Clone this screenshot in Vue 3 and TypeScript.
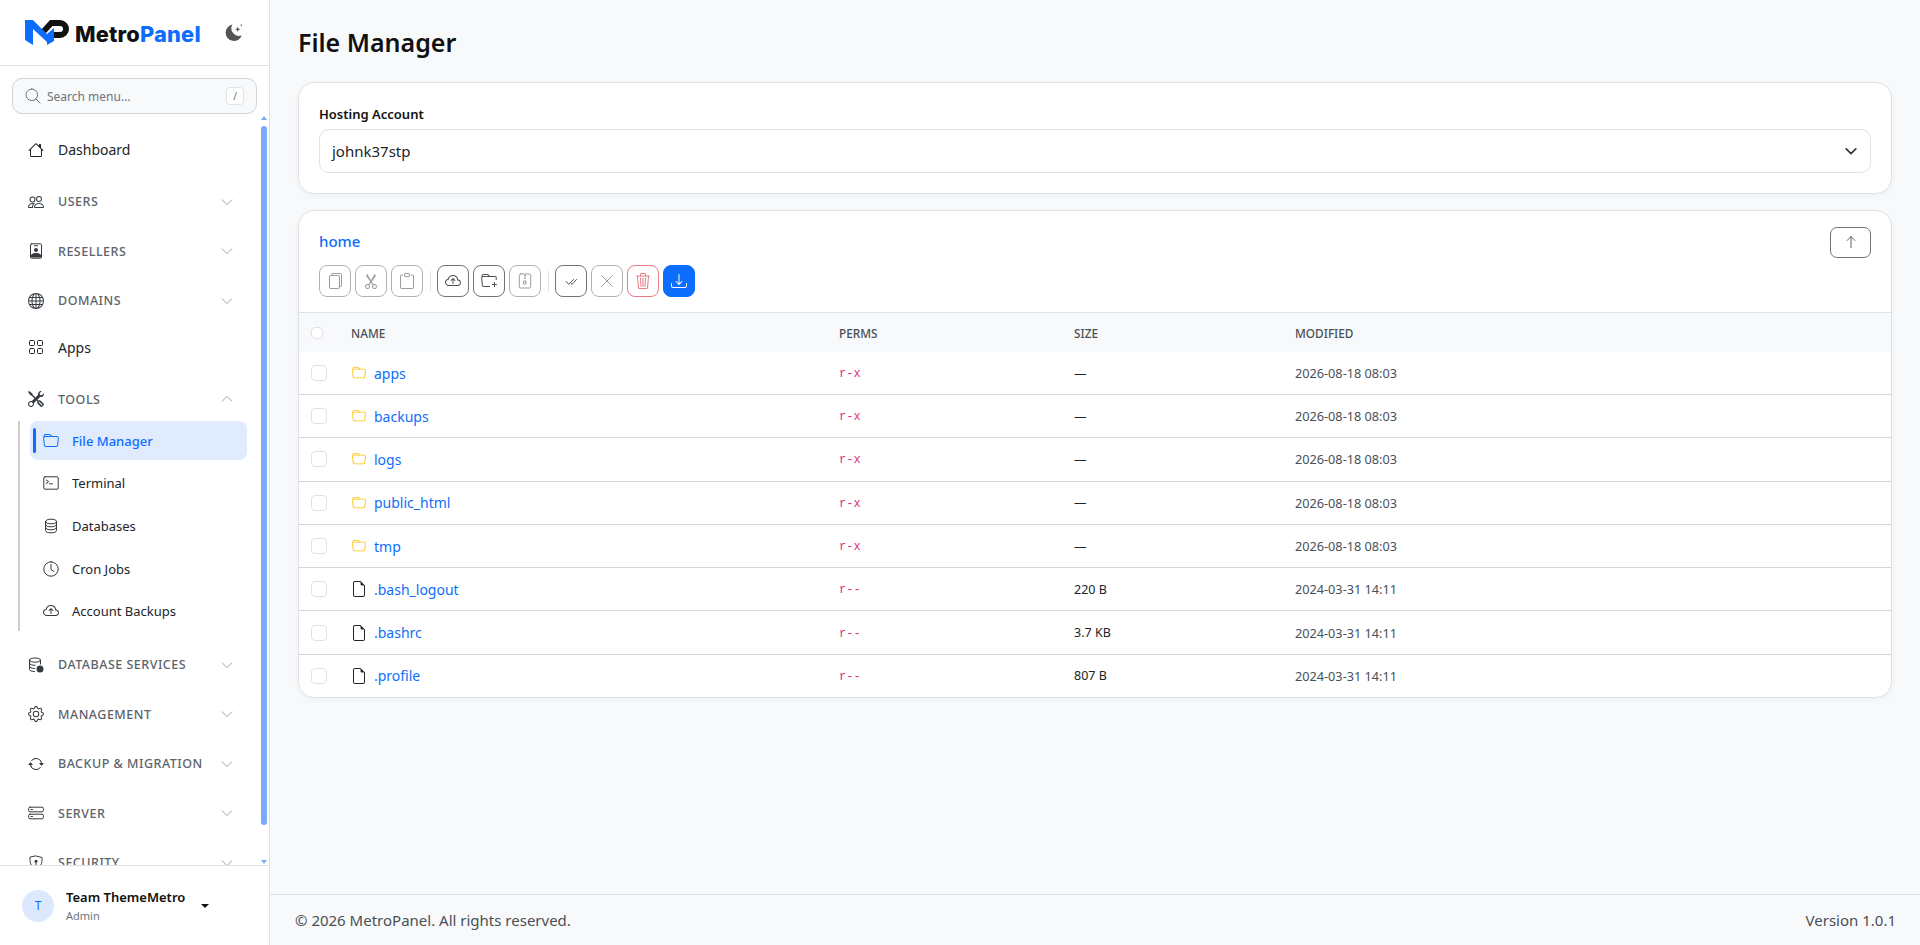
<script setup lang="ts">
import { h } from 'vue'

type IconDef = { s?: string; f?: string }

const icons: Record<string, IconDef> = {
  house: { f: 'M8.707 1.5a1 1 0 0 0-1.414 0L.646 8.146a.5.5 0 0 0 .708.708L2 8.207V13.5A1.5 1.5 0 0 0 3.5 15h9a1.5 1.5 0 0 0 1.5-1.5V8.207l.646.647a.5.5 0 0 0 .708-.708L13 5.793V2.5a.5.5 0 0 0-.5-.5h-1a.5.5 0 0 0-.5.5v1.293L8.707 1.5ZM13 7.207V13.5a.5.5 0 0 1-.5.5h-9a.5.5 0 0 1-.5-.5V7.207l5-5 5 5Z' },
  people: { f: 'M15 14s1 0 1-1-1-4-5-4-5 3-5 4 1 1 1 1h8Zm-7.978-1A.261.261 0 0 1 7 12.996c.001-.264.167-1.03.76-1.72C8.312 10.629 9.282 10 11 10c1.717 0 2.687.63 3.24 1.276.593.69.758 1.457.76 1.72l-.008.002a.274.274 0 0 1-.014.002H7.022ZM11 7a2 2 0 1 0 0-4 2 2 0 0 0 0 4Zm3-2a3 3 0 1 1-6 0 3 3 0 0 1 6 0ZM6.936 9.28a5.88 5.88 0 0 0-1.23-.247A7.35 7.35 0 0 0 5 9c-4 0-5 3-5 4 0 .667.333 1 1 1h4.216A2.238 2.238 0 0 1 5 13c0-1.01.377-2.042 1.09-2.904.243-.294.526-.569.846-.816ZM4.92 10A5.493 5.493 0 0 0 4 13H1c0-.26.164-1.03.76-1.724.545-.636 1.492-1.256 3.16-1.275ZM1.5 5.5a3 3 0 1 1 6 0 3 3 0 0 1-6 0Zm3-2a2 2 0 1 0 0 4 2 2 0 0 0 0-4Z' },
  badge: {
    s: 'M3.5.8h9a1 1 0 0 1 1 1v12.4a1 1 0 0 1-1 1h-9a1 1 0 0 1-1-1V1.8a1 1 0 0 1 1-1ZM6.5 2.8h3',
    f: 'M8 5a2 2 0 1 1 0 4 2 2 0 0 1 0-4ZM3 14.5V12c1-1.5 3-2 5-2s4 .5 5 2v2.5Z'
  },
  globe: { f: 'M0 8a8 8 0 1 1 16 0A8 8 0 0 1 0 8zm7.5-6.923c-.67.204-1.335.82-1.887 1.855A7.97 7.97 0 0 0 5.145 4H7.5V1.077zM4.09 4a9.267 9.267 0 0 1 .64-1.539 6.7 6.7 0 0 1 .597-.933A7.025 7.025 0 0 0 2.255 4H4.09zm-.582 3.5c.03-.877.138-1.718.312-2.5H1.674a6.958 6.958 0 0 0-.656 2.5h2.49zM4.847 5a12.5 12.5 0 0 0-.338 2.5H7.5V5H4.847zM8.5 5v2.5h2.99a12.495 12.495 0 0 0-.337-2.5H8.5zM4.51 8.5a12.5 12.5 0 0 0 .337 2.5H7.5V8.5H4.51zm3.99 0V11h2.653c.187-.765.306-1.608.338-2.5H8.5zM5.145 12c.138.386.295.744.468 1.068.552 1.035 1.218 1.65 1.887 1.855V12H5.145zm.182 2.472a6.696 6.696 0 0 1-.597-.933A9.268 9.268 0 0 1 4.09 12H2.255a7.024 7.024 0 0 0 3.072 2.472zM3.82 11a13.652 13.652 0 0 1-.312-2.5h-2.49c.062.89.291 1.733.656 2.5H3.82zm6.853 3.472A7.024 7.024 0 0 0 13.745 12H11.91a9.27 9.27 0 0 1-.64 1.539 6.688 6.688 0 0 1-.597.933zM8.5 12v2.923c.67-.204 1.335-.82 1.887-1.855.173-.324.33-.682.468-1.068H8.5zm3.68-1h2.146c.365-.767.594-1.61.656-2.5h-2.49a13.65 13.65 0 0 1-.312 2.5zm2.802-3.5a6.959 6.959 0 0 0-.656-2.5H12.18c.174.782.282 1.623.312 2.5h2.49zM11.27 2.461c.247.464.462.98.64 1.539h1.835a7.024 7.024 0 0 0-3.072-2.472c.218.284.418.598.597.933zM10.855 4a7.966 7.966 0 0 0-.468-1.068C9.835 1.897 9.17 1.282 8.5 1.077V4h2.355z' },
  grid: { s: 'M2.5 1.5h3a1 1 0 0 1 1 1v3a1 1 0 0 1-1 1h-3a1 1 0 0 1-1-1v-3a1 1 0 0 1 1-1ZM10.5 1.5h3a1 1 0 0 1 1 1v3a1 1 0 0 1-1 1h-3a1 1 0 0 1-1-1v-3a1 1 0 0 1 1-1ZM2.5 9.500h3a1 1 0 0 1 1 1v3a1 1 0 0 1-1 1h-3a1 1 0 0 1-1-1v-3a1 1 0 0 1 1-1ZM10.5 9.500h3a1 1 0 0 1 1 1v3a1 1 0 0 1-1 1h-3a1 1 0 0 1-1-1v-3a1 1 0 0 1 1-1Z' },
  tools: { f: 'M1 0 0 1l2.2 3.081a1 1 0 0 0 .815.419h.07a1 1 0 0 1 .708.293l2.675 2.675-2.617 2.654A3.003 3.003 0 0 0 0 13a3 3 0 1 0 5.878-.851l2.654-2.617.968.968-.305.914a1 1 0 0 0 .242 1.023l3.27 3.27a.997.997 0 0 0 1.414 0l1.586-1.586a.997.997 0 0 0 0-1.414l-3.27-3.27a1 1 0 0 0-1.023-.242L10.5 9.5l-.96-.96 2.68-2.643A3.005 3.005 0 0 0 16 3c0-.269-.035-.53-.102-.777l-2.14 2.141L12 4l-.364-1.757L13.777.102a3 3 0 0 0-3.675 3.68L7.462 6.46 4.793 3.793a1 1 0 0 1-.293-.707v-.071a1 1 0 0 0-.419-.814L1 0Zm9.646 10.646a.5.5 0 0 1 .708 0l2.914 2.915a.5.5 0 0 1-.707.707l-2.915-2.914a.5.5 0 0 1 0-.708ZM3 11l.471.242.529.026.287.445.445.287.026.529L5 13l-.242.471-.026.529-.445.287-.287.445-.529.026L3 15l-.471-.242L2 14.732l-.287-.445L1.268 14l-.026-.529L1 13l.242-.471.026-.529.445-.287.287-.445.529-.026L3 11Z' },
  folder: { f: 'M.54 3.87.5 3a2 2 0 0 1 2-2h3.672a2 2 0 0 1 1.414.586l.828.828A2 2 0 0 0 9.828 3h3.982a2 2 0 0 1 1.992 2.181l-.637 7A2 2 0 0 1 13.174 14H2.826a2 2 0 0 1-1.991-1.819l-.637-7a1.99 1.99 0 0 1 .342-1.31zM2.19 4a1 1 0 0 0-.996 1.09l.637 7a1 1 0 0 0 .995.91h10.348a1 1 0 0 0 .995-.91l.637-7A1 1 0 0 0 13.81 4H2.19zm4.69-1.707A1 1 0 0 0 6.172 2H2.5a1 1 0 0 0-1 .981l.006.139C1.72 3.042 1.95 3 2.19 3h5.396l-.707-.707z' },
  terminal: { s: 'M2 1.8h12A1.2 1.2 0 0 1 15.2 3v10a1.2 1.2 0 0 1-1.2 1.2H2A1.2 1.2 0 0 1 .8 13V3A1.2 1.2 0 0 1 2 1.8ZM3.2 5l2.5 1.7-2.5 1.7M6.5 8.8h3' },
  database: { s: 'M2.5 3.5C2.5 2 5 1.2 8 1.2s5.5.8 5.5 2.3S11 5.8 8 5.8 2.5 5 2.5 3.5ZM2.5 3.5v9C2.5 14 5 14.8 8 14.8s5.5-.8 5.5-2.3v-9M2.5 6.500C2.5 8 5 8.800 8 8.800s5.5-.8 5.5-2.3M2.5 9.500C2.5 11 5 11.800 8 11.800s5.500-.8 5.500-2.300' },
  clock: { s: 'M8 .8a7.2 7.2 0 1 0 0 14.4A7.2 7.2 0 0 0 8 .8ZM8 3.5v5l3 2' },
  cloudUp: { f: 'M7.646 5.146a.5.5 0 0 1 .708 0l2 2a.5.5 0 0 1-.708.708L8.5 6.707V10.5a.5.5 0 0 1-1 0V6.707L6.354 7.854a.5.5 0 1 1-.708-.708l2-2zM4.406 3.342A5.53 5.53 0 0 1 8 2c2.69 0 4.923 2 5.166 4.579C14.758 6.804 16 8.137 16 9.773 16 11.569 14.502 13 12.687 13H3.781C1.708 13 0 11.366 0 9.318c0-1.763 1.266-3.223 2.942-3.593.143-.863.698-1.723 1.464-2.383zm.653.757c-.757.653-1.153 1.44-1.153 2.056v.448l-.445.049C2.064 6.805 1 7.952 1 9.318 1 10.785 2.23 12 3.781 12h8.906C13.98 12 15 10.988 15 9.773c0-1.216-1.02-2.228-2.313-2.228h-.5v-.5C12.188 4.825 10.328 3 8 3a4.53 4.53 0 0 0-2.941 1.1z' },
  dbGear: {
    s: 'M1.5 3C1.5 1.8 4 1 7 1s5.5.8 5.5 2S10 5.2 7 5.2 1.5 4.2 1.5 3ZM1.5 3v9.5c0 1.2 2.2 2 5 2M12.5 3v4M1.5 6.3c0 1.2 2.5 2 5.5 2M1.5 9.5c0 1.2 2.2 2 5 2',
    f: 'M12 8.5a3.5 3.5 0 1 1 0 7 3.5 3.5 0 0 1 0-7Z'
  },
  gear: { f: 'M8 4.754a3.246 3.246 0 1 0 0 6.492 3.246 3.246 0 0 0 0-6.492zM5.754 8a2.246 2.246 0 1 1 4.492 0 2.246 2.246 0 0 1-4.492 0zM9.796 1.343c-.527-1.79-3.065-1.79-3.592 0l-.094.319a.873.873 0 0 1-1.255.52l-.292-.16c-1.64-.892-3.433.902-2.54 2.541l.159.292a.873.873 0 0 1-.52 1.255l-.319.094c-1.79.527-1.79 3.065 0 3.592l.319.094a.873.873 0 0 1 .52 1.255l-.16.292c-.892 1.64.901 3.434 2.541 2.54l.292-.159a.873.873 0 0 1 1.255.52l.094.319c.527 1.79 3.065 1.79 3.592 0l.094-.319a.873.873 0 0 1 1.255-.52l.292.16c1.64.893 3.434-.902 2.54-2.541l-.159-.292a.873.873 0 0 1 .52-1.255l.319-.094c1.79-.527 1.79-3.065 0-3.592l-.319-.094a.873.873 0 0 1-.52-1.255l.16-.292c.893-1.64-.902-3.433-2.541-2.54l-.292.159a.873.873 0 0 1-1.255-.52l-.094-.319zm-2.633.283c.246-.835 1.428-.835 1.674 0l.094.319a1.873 1.873 0 0 0 2.693 1.115l.291-.16c.764-.415 1.6.42 1.184 1.185l-.159.292a1.873 1.873 0 0 0 1.116 2.692l.318.094c.835.246.835 1.428 0 1.674l-.319.094a1.873 1.873 0 0 0-1.115 2.693l.16.291c.415.764-.42 1.6-1.185 1.184l-.291-.159a1.873 1.873 0 0 0-2.693 1.116l-.094.318c-.246.835-1.428.835-1.674 0l-.094-.319a1.873 1.873 0 0 0-2.692-1.115l-.292.16c-.764.415-1.6-.42-1.184-1.185l.159-.291A1.873 1.873 0 0 0 1.945 8.93l-.319-.094c-.835-.246-.835-1.428 0-1.674l.319-.094A1.873 1.873 0 0 0 3.06 4.377l-.16-.292c-.415-.764.42-1.6 1.185-1.184l.292.159a1.873 1.873 0 0 0 2.692-1.115l.094-.319z' },
  sync: { f: 'M11.534 7h3.932a.25.25 0 0 1 .192.41l-1.966 2.36a.25.25 0 0 1-.384 0l-1.966-2.36a.25.25 0 0 1 .192-.41zm-11 2h3.932a.25.25 0 0 0 .192-.41L2.692 6.23a.25.25 0 0 0-.384 0L.342 8.59A.25.25 0 0 0 .534 9zM8 3c-1.552 0-2.94.707-3.857 1.818a.5.5 0 1 1-.771-.636A6.002 6.002 0 0 1 13.917 7H12.9A5.002 5.002 0 0 0 8 3zM3.1 9a5.002 5.002 0 0 0 8.757 2.182.5.5 0 1 1 .771.636A6.002 6.002 0 0 1 2.083 9H3.1z' },
  server: { s: 'M2 2.2h12a1.4 1.4 0 0 1 1.4 1.4v1.8A1.4 1.4 0 0 1 14 6.8H2A1.4 1.4 0 0 1 .6 5.4V3.6A1.4 1.4 0 0 1 2 2.2ZM2 9.2h12a1.4 1.4 0 0 1 1.4 1.4v1.8a1.4 1.4 0 0 1-1.4 1.4H2a1.4 1.4 0 0 1-1.4-1.4v-1.8A1.4 1.4 0 0 1 2 9.2ZM3 4.5h1.5M3 11.5h1.5' },
  shield: { s: 'M8 1l6 1.5c.4 6-1.5 10-6 12.5C3.5 12.5 1.600 8.500 2 2.500ZM8 8v3', f: 'M8 4.800a1.500 1.500 0 1 1 0 3 1.500 1.500 0 0 1 0-3Z' },
  chevDown: { s: 'M2.5 5.500 8 11l5.500-5.500' },
  chevUp: { s: 'M2.5 10.500 8 5l5.500 5.500' },
  search: { s: 'M6.800 1a5.800 5.800 0 1 0 0 11.600A5.800 5.800 0 0 0 6.800 1ZM11 11l4 4' },
  copy: { f: 'M13 0H6a2 2 0 0 0-2 2 2 2 0 0 0-2 2v10a2 2 0 0 0 2 2h7a2 2 0 0 0 2-2 2 2 0 0 0 2-2V2a2 2 0 0 0-2-2zm0 13V4a2 2 0 0 0-2-2H5a1 1 0 0 1 1-1h7a1 1 0 0 1 1 1v10a1 1 0 0 1-1 1zM3 4a1 1 0 0 1 1-1h7a1 1 0 0 1 1 1v10a1 1 0 0 1-1 1H4a1 1 0 0 1-1-1V4z' },
  cut: { f: 'M3.5 3.5c-.614-.884-.074-1.962.858-2.5L8 7.226 11.642 1c.932.538 1.472 1.616.858 2.5L8.81 8.61l1.556 2.661a2.5 2.5 0 1 1-.794.637L8 9.73l-1.572 2.177a2.5 2.5 0 1 1-.794-.637L7.19 8.61 3.5 3.5zm2.5 10a1.5 1.5 0 1 0-3 0 1.5 1.5 0 0 0 3 0zm7 0a1.5 1.5 0 1 0-3 0 1.5 1.5 0 0 0 3 0z' },
  paste: { f: 'M4 1.5H3a2 2 0 0 0-2 2V14a2 2 0 0 0 2 2h10a2 2 0 0 0 2-2V3.5a2 2 0 0 0-2-2h-1v1h1a1 1 0 0 1 1 1V14a1 1 0 0 1-1 1H3a1 1 0 0 1-1-1V3.5a1 1 0 0 1 1-1h1v-1zM9.5 1a.5.5 0 0 1 .5.5v1a.5.5 0 0 1-.5.5h-3a.5.5 0 0 1-.5-.5v-1a.5.5 0 0 1 .5-.5h3zm-3-1A1.5 1.5 0 0 0 5 1.5v1A1.5 1.5 0 0 0 6.5 4h3A1.5 1.5 0 0 0 11 2.5v-1A1.5 1.5 0 0 0 9.5 0h-3z' },
  folderPlus: { f: 'm.5 3 .04.87a1.99 1.99 0 0 0-.342 1.311l.637 7A2 2 0 0 0 2.826 14H9v-1H2.826a1 1 0 0 1-.995-.91l-.637-7A1 1 0 0 1 2.19 4h11.62a1 1 0 0 1 .996 1.09L14.66 7h1.005l.13-1.819A2 2 0 0 0 13.81 3H9.828a2 2 0 0 1-1.414-.586l-.828-.828A2 2 0 0 0 6.172 1H2.5a2 2 0 0 0-2 2zm5.672-1a1 1 0 0 1 .707.293L7.586 3H2.19c-.24 0-.47.042-.683.12L1.5 2.98a1 1 0 0 1 1-.98h3.672zM13.5 9a.5.5 0 0 1 .5.5V11h1.5a.5.5 0 1 1 0 1H14v1.5a.5.5 0 1 1-1 0V12h-1.5a.5.5 0 0 1 0-1H13V9.5a.5.5 0 0 1 .5-.5z' },
  zip: { s: 'M3.5 1h9a1.2 1.2 0 0 1 1.2 1.2v11.6a1.2 1.2 0 0 1-1.2 1.2h-9a1.2 1.2 0 0 1-1.2-1.2V2.2A1.2 1.2 0 0 1 3.5 1ZM7.5 2.5h1M8.5 4h-1M7.5 5.5h1M7 8h2v3H7Z' },
  checkAll: { s: 'M3 8.5l2.8 2.800 4.700-4.800M8.300 10.700l.7.600 4.500-4.800' },
  x: { s: 'M2.5 2.5l11 11M13.5 2.5l-11 11' },
  trash: { f: 'M6.5 1h3a.5.5 0 0 1 .5.5v1H6v-1a.5.5 0 0 1 .5-.5ZM11 2.5v-1A1.5 1.5 0 0 0 9.5 0h-3A1.5 1.5 0 0 0 5 1.5v1H1.5a.5.5 0 0 0 0 1h.538l.853 10.66A2 2 0 0 0 4.885 16h6.23a2 2 0 0 0 1.994-1.84l.853-10.66h.538a.5.5 0 0 0 0-1H11Zm1.958 1-.846 10.58a1 1 0 0 1-.997.92h-6.23a1 1 0 0 1-.997-.92L3.042 3.5h9.916Zm-7.487 1a.5.5 0 0 1 .528.47l.5 8.5a.5.5 0 0 1-.998.06L5 5.03a.5.5 0 0 1 .47-.53Zm5.058 0a.5.5 0 0 1 .47.53l-.5 8.5a.5.5 0 1 1-.998-.06l.5-8.5a.5.5 0 0 1 .528-.47ZM8 4.5a.5.5 0 0 1 .5.5v8.5a.5.5 0 0 1-1 0V5a.5.5 0 0 1 .5-.5Z' },
  download: { f: 'M.5 9.9a.5.5 0 0 1 .5.5v2.5a1 1 0 0 0 1 1h12a1 1 0 0 0 1-1v-2.5a.5.5 0 0 1 1 0v2.5a2 2 0 0 1-2 2H2a2 2 0 0 1-2-2v-2.5a.5.5 0 0 1 .5-.5zM7.646 11.854a.5.5 0 0 0 .708 0l3-3a.5.5 0 0 0-.708-.708L8.5 10.293V1.5a.5.5 0 0 0-1 0v8.793L5.354 8.146a.5.5 0 1 0-.708.708l3 3z' },
  up: { s: 'M8 14.5V1.8M3.5 6.3 8 1.8l4.5 4.5' },
  file: { f: 'M14 4.5V14a2 2 0 0 1-2 2H4a2 2 0 0 1-2-2V2a2 2 0 0 1 2-2h5.5L14 4.5zm-3 0A1.5 1.5 0 0 1 9.5 3V1H4a1 1 0 0 0-1 1v12a1 1 0 0 0 1 1h8a1 1 0 0 0 1-1V4.5h-2z' }
}

// small svg helper, the paths draw in the text colour of the parent
const Icon = (props: { name: string; size?: number }) => {
  const def = icons[props.name]
  const size = props.size ?? 16
  return h('svg', { width: size, height: size, viewBox: '0 0 16 16', 'aria-hidden': 'true' }, [
    def.s ? h('path', { d: def.s, fill: 'none', stroke: 'currentColor', 'stroke-width': 1, 'stroke-linecap': 'round', 'stroke-linejoin': 'round' }) : null,
    def.f ? h('path', { d: def.f, fill: 'currentColor' }) : null
  ])
}
Icon.props = ['name', 'size']

const subItems = [
  { label: 'File Manager', icon: 'folder', active: true },
  { label: 'Terminal', icon: 'terminal' },
  { label: 'Databases', icon: 'database' },
  { label: 'Cron Jobs', icon: 'clock' },
  { label: 'Account Backups', icon: 'cloudUp' }
]

const lowerGroups = [
  { label: 'DATABASE SERVICES', icon: 'dbGear' },
  { label: 'MANAGEMENT', icon: 'gear' },
  { label: 'BACKUP & MIGRATION', icon: 'sync' },
  { label: 'SERVER', icon: 'server' },
  { label: 'SECURITY', icon: 'shield' }
]

const toolbar = [
  [
    { icon: 'copy', tone: 'off' },
    { icon: 'cut', tone: 'off' },
    { icon: 'paste', tone: 'off' }
  ],
  [
    { icon: 'cloudUp', tone: 'on' },
    { icon: 'folderPlus', tone: 'on' },
    { icon: 'zip', tone: 'off' }
  ],
  [
    { icon: 'checkAll', tone: 'on' },
    { icon: 'x', tone: 'off' },
    { icon: 'trash', tone: 'danger' },
    { icon: 'download', tone: 'primary' }
  ]
]

const rows = [
  { name: 'apps', dir: true, perms: 'r-x', size: '—', modified: '2026-08-18 08:03' },
  { name: 'backups', dir: true, perms: 'r-x', size: '—', modified: '2026-08-18 08:03' },
  { name: 'logs', dir: true, perms: 'r-x', size: '—', modified: '2026-08-18 08:03' },
  { name: 'public_html', dir: true, perms: 'r-x', size: '—', modified: '2026-08-18 08:03' },
  { name: 'tmp', dir: true, perms: 'r-x', size: '—', modified: '2026-08-18 08:03' },
  { name: '.bash_logout', dir: false, perms: 'r--', size: '220 B', modified: '2024-03-31 14:11' },
  { name: '.bashrc', dir: false, perms: 'r--', size: '3.7 KB', modified: '2024-03-31 14:11' },
  { name: '.profile', dir: false, perms: 'r--', size: '807 B', modified: '2024-03-31 14:11' }
]
</script>

<template>
  <div class="shell">
    <aside class="sidebar">
      <div class="brand">
        <div class="logo">
          <svg width="46" height="27" viewBox="0 0 46 27" aria-hidden="true">
            <path d="M16 11 25 1H35A9 9 0 0 1 35 19H29V13H35A3 3 0 0 0 35 7H27.5L21 14Z" fill="#111" />
            <path d="M0 1H8L22 15V23L8 10V26L0 21Z" fill="#0d6efd" />
            <path d="M22 15 29 9V22L22 26Z" fill="#0d6efd" />
          </svg>
          <span class="logo-text">Metro<em>Panel</em></span>
        </div>
        <svg class="moon" width="19" height="19" viewBox="0 0 18 18" aria-hidden="true">
          <path d="M8 1.500A7.800 7.800 0 1 0 16.800 11.500 7 7 0 0 1 8 1.500Z" fill="#555" />
          <path d="M13 3.500l.7 1.800 1.800.7-1.800.7-.7 1.800-.7-1.800-1.800-.7 1.800-.7ZM16.300.8l.3.9.9.3-.9.3-.3.9-.3-.9-.9-.3.9-.3Z" fill="#555" />
        </svg>
      </div>

      <div class="search-wrap">
        <div class="search">
          <Icon class="search-icon" name="search" />
          <span class="search-text">Search menu...</span>
          <kbd class="search-key">/</kbd>
        </div>
      </div>

      <nav class="menu">
        <a class="link top"><Icon name="house" /><span>Dashboard</span></a>
        <a class="link group"><Icon name="people" /><span>USERS</span><Icon class="chev" name="chevDown" :size="14" /></a>
        <a class="link group"><Icon name="badge" /><span>RESELLERS</span><Icon class="chev" name="chevDown" :size="14" /></a>
        <a class="link group"><Icon name="globe" /><span>DOMAINS</span><Icon class="chev" name="chevDown" :size="14" /></a>
        <a class="link top"><Icon name="grid" /><span>Apps</span></a>
        <a class="link group open"><Icon name="tools" /><span>TOOLS</span><Icon class="chev" name="chevUp" :size="14" /></a>
        <div class="submenu">
          <a v-for="item in subItems" :key="item.label" class="sublink" :class="{ active: item.active }">
            <Icon :name="item.icon" />
            <span>{{ item.label }}</span>
          </a>
        </div>
        <a v-for="group in lowerGroups" :key="group.label" class="link group">
          <Icon :name="group.icon" />
          <span>{{ group.label }}</span>
          <Icon class="chev" name="chevDown" :size="14" />
        </a>
      </nav>

      <div class="scrollbar" aria-hidden="true">
        <i class="arrow arrow-up"></i>
        <i class="thumb"></i>
        <i class="arrow arrow-down"></i>
      </div>

      <div class="user">
        <div class="avatar">T</div>
        <div class="user-info">
          <strong>Team ThemeMetro</strong>
          <small>Admin</small>
        </div>
        <i class="caret"></i>
      </div>
    </aside>

    <div class="main">
      <main class="content">
        <h1 class="title">File Manager</h1>

        <section class="card account">
          <label class="account-label">Hosting Account</label>
          <div class="select">
            <span>johnk37stp</span>
            <svg width="14" height="14" viewBox="0 0 16 16" aria-hidden="true">
              <path d="M2.500 5.500 8 11l5.500-5.500" fill="none" stroke="#343a40" stroke-width="2" stroke-linecap="round" stroke-linejoin="round" />
            </svg>
          </div>
        </section>

        <section class="card browser">
          <div class="browser-head">
            <div class="crumb-row">
              <a class="crumb">home</a>
              <button class="up-btn" type="button"><Icon name="up" :size="14" /></button>
            </div>
            <div class="toolbar">
              <template v-for="(set, i) in toolbar" :key="i">
                <span v-if="i > 0" class="divider"></span>
                <button v-for="btn in set" :key="btn.icon" class="tool" :class="btn.tone" type="button">
                  <Icon :name="btn.icon" />
                </button>
              </template>
            </div>
          </div>

          <div class="table">
            <div class="row head">
              <span class="check small"></span>
              <span>NAME</span>
              <span>PERMS</span>
              <span>SIZE</span>
              <span>MODIFIED</span>
            </div>
            <div v-for="row in rows" :key="row.name" class="row item">
              <span class="check"></span>
              <a class="name">
                <span class="name-icon">
                  <Icon v-if="row.dir" class="dir-icon" name="folder" :size="14" />
                  <Icon v-else class="file-icon" name="file" />
                </span>
                {{ row.name }}
              </a>
              <code class="perms">{{ row.perms }}</code>
              <span class="size">{{ row.size }}</span>
              <span class="modified">{{ row.modified }}</span>
            </div>
          </div>
        </section>
      </main>

      <footer class="footer">
        <span>© 2026 MetroPanel. All rights reserved.</span>
        <span>Version 1.0.1</span>
      </footer>
    </div>
  </div>
</template>

<style>
html,
body {
  margin: 0;
  height: 100%;
  background: #f8f9fa;
}
</style>

<style scoped>
.shell {
  display: flex;
  height: 945px;
  overflow: hidden;
  font-family: "Noto Sans", "Open Sans", sans-serif;
  color: #212529;
  background: #f8f9fa;
}

.sidebar {
  position: relative;
  flex: 0 0 270px;
  display: flex;
  flex-direction: column;
  background: #fff;
  border-right: 1px solid #dee2e6;
  box-sizing: border-box;
}

.brand {
  flex: 0 0 66px;
  box-sizing: border-box;
  display: flex;
  align-items: center;
  justify-content: space-between;
  padding: 0 26px 0 25px;
  border-bottom: 1px solid #dee2e6;
}

.logo {
  display: flex;
  align-items: center;
  gap: 4px;
}

.logo-text {
  margin-top: 2px;
  font-family: "Inter", sans-serif;
  font-size: 21.8px;
  font-weight: 800;
  color: #111;
  letter-spacing: 0.2px;
}

.logo-text em {
  font-style: normal;
  color: #0d6efd;
}

.search-wrap {
  padding: 12px 12px 0;
}

.search {
  height: 36px;
  display: flex;
  align-items: center;
  gap: 6px;
  padding: 0 12px;
  background: #f8f9fa;
  border: 1px solid #ced4da;
  border-radius: 10px;
  box-sizing: border-box;
}

.search-icon {
  color: #6c757d;
}

.search-text {
  flex: 1;
  font-size: 12px;
  color: #6c757d;
}

.search-key {
  width: 16px;
  height: 16px;
  display: grid;
  place-items: center;
  font-family: "Noto Sans", sans-serif;
  font-size: 10px;
  color: #6c757d;
  background: #fff;
  border: 1px solid #dee2e6;
  border-radius: 4px;
}

.menu {
  flex: 1;
  min-height: 0;
  overflow: hidden;
  padding: 14px 0 0;
}

.link {
  display: flex;
  align-items: center;
  gap: 14px;
  padding: 0 35px 0 28px;
  color: #343a40;
}

.link.top {
  height: 48px;
  margin: -2.5px 0 3.5px;
  font-size: 14px;
  color: #212529;
}

.link.group {
  height: 49.5px;
  font-size: 12.5px;
  font-weight: 500;
  letter-spacing: 0.5px;
  color: #5c636a;
}

.link.group svg:first-child {
  color: #343a40;
}

.chev {
  margin-left: auto;
  color: #8d949b;
}

.submenu {
  display: flex;
  flex-direction: column;
  margin: -3px 22px 9px 18px;
  padding-left: 10px;
  border-left: 2px solid #ccc;
}

.sublink {
  height: 43px;
  display: flex;
  align-items: center;
  gap: 13px;
  padding-left: 13px;
  font-size: 13px;
  color: #212529;
}

.sublink:last-child {
  height: 41px;
}

.sublink svg {
  color: #343a40;
}

.sublink.active {
  position: relative;
  height: 39px;
  margin-bottom: 1px;
  background: #e0ebfd;
  border-radius: 8px;
  color: #0d6efd;
  font-weight: 500;
}

.sublink.active svg {
  color: #0d6efd;
}

.sublink.active::before {
  content: "";
  position: absolute;
  left: 3px;
  top: 7px;
  bottom: 7px;
  width: 3px;
  border-radius: 2px;
  background: #0d6efd;
}

.scrollbar {
  position: absolute;
  right: 2px;
  top: 116px;
  bottom: 81px;
  width: 7px;
  display: flex;
  flex-direction: column;
  align-items: center;
}

.thumb {
  flex: 0 0 699px;
  width: 6px;
  margin: 6px 0 auto;
  background: #7aacfb;
  border-radius: 3px;
}

.arrow {
  width: 0;
  height: 0;
  border-left: 3px solid transparent;
  border-right: 3px solid transparent;
}

.arrow-up {
  border-bottom: 4px solid #7aacfb;
}

.arrow-down {
  border-top: 4px solid #7aacfb;
}

.user {
  position: relative;
  flex: 0 0 80px;
  box-sizing: border-box;
  display: flex;
  align-items: center;
  gap: 12px;
  padding: 0 22px;
  background: #fff;
  border-top: 1px solid #dee2e6;
}

.avatar {
  width: 32px;
  height: 32px;
  display: grid;
  place-items: center;
  border-radius: 50%;
  background: #dbe8fd;
  color: #0d6efd;
  font-size: 12px;
}

.user-info {
  display: flex;
  flex-direction: column;
  gap: 4px;
}

.user-info strong {
  font-size: 13px;
  font-weight: 600;
  color: #111;
  line-height: 16px;
}

.user-info small {
  font-size: 11px;
  color: #6c757d;
  line-height: 14px;
}

.caret {
  margin-left: 4px;
  border-top: 4px solid #111;
  border-left: 4px solid transparent;
  border-right: 4px solid transparent;
}

.main {
  flex: 1;
  min-width: 0;
  display: flex;
  flex-direction: column;
}

.content {
  flex: 1;
  min-height: 0;
  padding: 23px 28px 0;
}

.title {
  margin: 0 0 21px;
  font-size: 25px;
  font-weight: 600;
  line-height: 38px;
  color: #111;
}

.card {
  background: #fff;
  border: 1px solid #dee2e6;
  border-radius: 16px;
  box-shadow: 0 2px 6px rgba(0, 0, 0, 0.04);
}

.account {
  height: 112px;
  box-sizing: border-box;
  padding: 21px 20px 0;
  margin-bottom: 16px;
}

.account-label {
  display: block;
  font-size: 13px;
  font-weight: 600;
  line-height: 20px;
  margin-bottom: 5px;
  color: #111;
}

.select {
  height: 44px;
  box-sizing: border-box;
  display: flex;
  align-items: center;
  justify-content: space-between;
  padding: 0 12px;
  margin-top: 1px;
  border: 1px solid #dee2e6;
  border-radius: 10px;
  font-size: 15px;
}

.browser {
  overflow: hidden;
}

.browser-head {
  padding: 15px 20px;
}

.crumb-row {
  display: flex;
  align-items: center;
  justify-content: space-between;
  height: 32px;
  margin-bottom: 7px;
}

.crumb {
  margin-top: -2px;
  font-size: 15px;
  font-weight: 500;
  color: #0d6efd;
}

.up-btn {
  width: 41px;
  height: 31px;
  display: grid;
  place-items: center;
  padding: 0;
  background: #fff;
  border: 1px solid #6c757d;
  border-radius: 7px;
  color: #495057;
}

.toolbar {
  display: flex;
  align-items: center;
  gap: 4px;
}

.tool {
  width: 32px;
  height: 32px;
  display: grid;
  place-items: center;
  padding: 0;
  background: #fff;
  border: 1px solid #6c757d;
  border-radius: 8px;
  color: #495057;
}

.tool.off {
  opacity: 0.55;
}

.tool.danger {
  border-color: #dc3545;
  color: #dc3545;
  opacity: 0.65;
}

.tool.primary {
  background: #0d6efd;
  border-color: #0d6efd;
  color: #fff;
}

.divider {
  width: 1px;
  height: 20px;
  margin: 0 2.5px;
  background: #dee2e6;
}

.row {
  display: grid;
  grid-template-columns: 40px 488px 235px 221px 1fr;
  align-items: center;
  padding-left: 12px;
}

.row.head {
  height: 40px;
  box-sizing: border-box;
  background: #f8f9fa;
  border-top: 1px solid #dee2e6;
  font-size: 11.8px;
  font-weight: 500;
  color: #495057;
}

.row.item {
  height: 43.3px;
  box-sizing: border-box;
  border-top: 1px solid #d3d5d8;
}

.head + .item {
  height: 42px;
  border-top: 0;
}

.check {
  width: 16px;
  height: 16px;
  box-sizing: border-box;
  background: #fff;
  border: 1px solid #dee2e6;
  border-radius: 4px;
}

.check.small {
  width: 12px;
  height: 12px;
}

.name {
  display: flex;
  align-items: center;
  font-size: 14px;
  color: #0d6efd;
}

.name-icon {
  flex: 0 0 23px;
  display: flex;
  align-items: center;
}

.dir-icon {
  margin-left: 1px;
  color: #ffc107;
}

.file-icon {
  color: #212529;
}

.perms {
  margin-top: 2px;
  font-family: "Liberation Mono", monospace;
  font-size: 12px;
  color: #d63384;
}

.size {
  font-size: 12.5px;
  color: #212529;
}

.modified {
  font-size: 12.7px;
  color: #495057;
}

.footer {
  flex: 0 0 51px;
  box-sizing: border-box;
  display: flex;
  align-items: center;
  justify-content: space-between;
  padding: 0 24px 0 25px;
  border-top: 1px solid #dee2e6;
  font-size: 15px;
  color: #495057;
}
</style>
